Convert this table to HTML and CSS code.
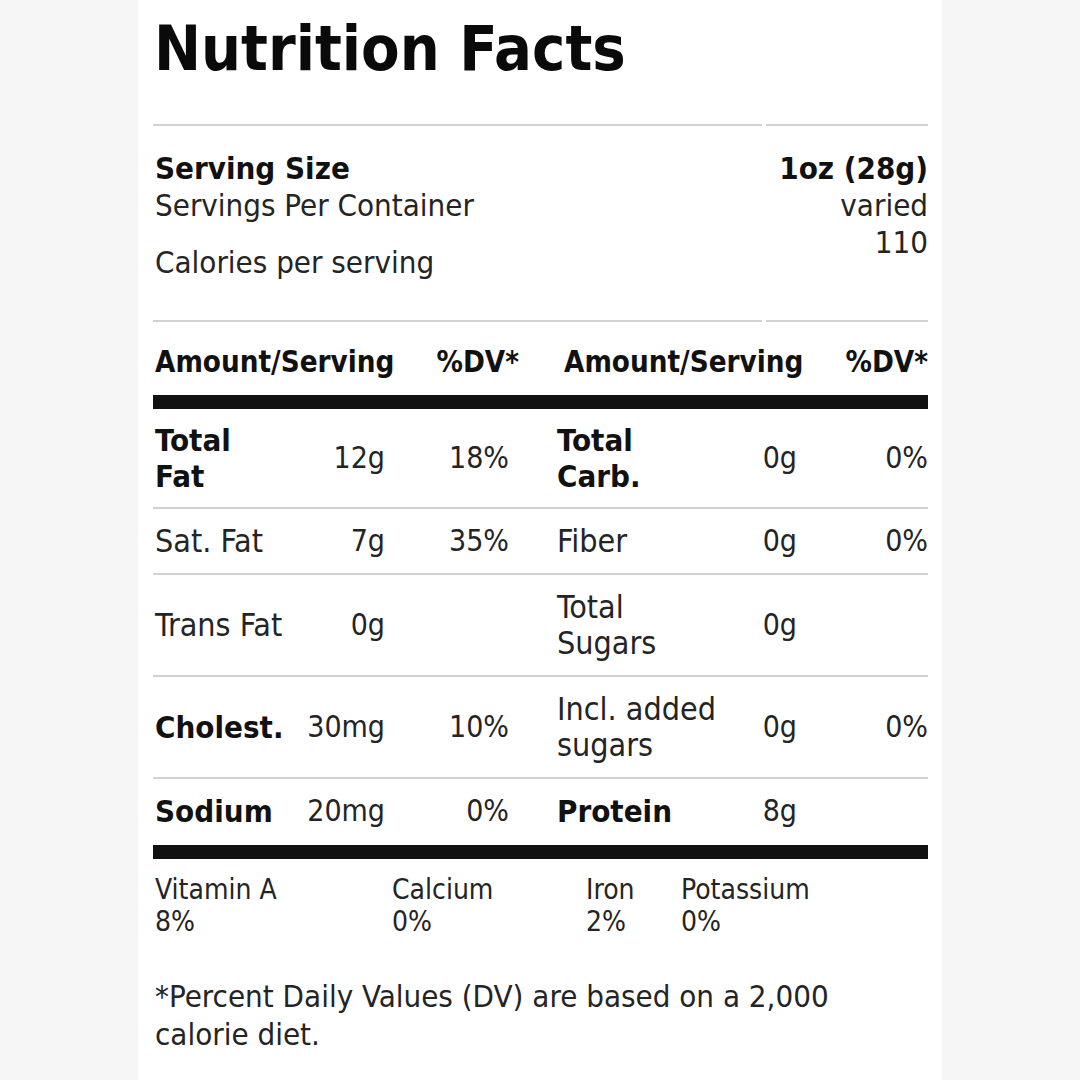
FILE: index.html
```html
<!DOCTYPE html>
<html lang="en">
<head>
<meta charset="utf-8">
<title>Nutrition Facts</title>
<link rel="stylesheet" href="styles.css">
</head>
<body>
<main class="label">
  <h1 class="title">Nutrition Facts</h1>
  <div class="rule"><span></span><span></span></div>

  <section class="serving">
    <div class="serving-left">
      <div class="b">Serving Size</div>
      <div>Servings Per Container</div>
      <div class="calories">Calories per serving</div>
    </div>
    <div class="serving-right">
      <div class="b">1oz (28g)</div>
      <div>varied</div>
      <div>110</div>
    </div>
  </section>

  <div class="rule"><span></span><span></span></div>

  <div class="head">
    <div class="head-half"><span>Amount/Serving</span><span>%DV*</span></div>
    <div class="head-half"><span>Amount/Serving</span><span>%DV*</span></div>
  </div>
  <div class="bar"></div>

  <div class="row first">
    <div class="lbl b">Total<br>Fat</div><div class="num">12g</div><div class="num">18%</div>
    <div class="lbl lbl2 b">Total<br>Carb.</div><div class="num">0g</div><div class="num">0%</div>
  </div>
  <div class="row">
    <div class="lbl">Sat. Fat</div><div class="num">7g</div><div class="num">35%</div>
    <div class="lbl lbl2">Fiber</div><div class="num">0g</div><div class="num">0%</div>
  </div>
  <div class="row">
    <div class="lbl">Trans Fat</div><div class="num">0g</div><div class="num"></div>
    <div class="lbl lbl2">Total<br>Sugars</div><div class="num">0g</div><div class="num"></div>
  </div>
  <div class="row">
    <div class="lbl b">Cholest.</div><div class="num">30mg</div><div class="num">10%</div>
    <div class="lbl lbl2">Incl. added<br>sugars</div><div class="num">0g</div><div class="num">0%</div>
  </div>
  <div class="row last">
    <div class="lbl b">Sodium</div><div class="num">20mg</div><div class="num">0%</div>
    <div class="lbl lbl2 b">Protein</div><div class="num">8g</div><div class="num"></div>
  </div>
  <div class="bar"></div>

  <div class="vitamins">
    <div>Vitamin A<br>8%</div>
    <div>Calcium<br>0%</div>
    <div>Iron<br>2%</div>
    <div>Potassium<br>0%</div>
  </div>

  <p class="note">*Percent Daily Values (DV) are based on a 2,000 calorie diet.</p>
</main>
</body>
</html>
```
FILE: styles.css
```css
html, body {
  margin: 0;
  padding: 0;
  background: #f6f6f6;
}
body {
  font-family: "DejaVu Sans Condensed", "DejaVu Sans", sans-serif;
  font-stretch: condensed;
  color: #242424;
}
.label {
  width: 775px;
  min-height: 1080px;
  margin: 0 auto;
  padding: 0 14px 0 15px;
  background: #fff;
  box-sizing: content-box;
}
.b { font-weight: bold; color: #111; }
.title {
  margin: 0 0 39px 1px;
  padding-top: 12px;
  font-size: 62.5px;
  line-height: 73px;
  font-weight: bold;
  color: #0a0a0a;
}
.rule {
  display: flex;
  gap: 4px;
}
.rule span {
  height: 2px;
  background: #d2d2d2;
}
.rule span:first-child { flex: 0 0 609px; }
.rule span:last-child { flex: 1; }
.serving {
  display: flex;
  justify-content: space-between;
  padding: 24px 0 39px 2px;
  font-size: 31px;
  line-height: 37px;
}
.serving-right { text-align: right; }
.calories { margin-top: 20px; }
.head {
  display: flex;
  gap: 45px;
  padding: 22px 0 15px 2px;
  font-size: 29.3px;
  line-height: 36px;
  font-weight: bold;
  color: #111;
}
.head-half {
  flex: 1;
  display: flex;
  justify-content: space-between;
}
.bar {
  height: 14px;
  background: #111;
}
.row {
  display: grid;
  grid-template-columns: 150px 82px 124px 198px 90px 131px;
  align-items: center;
  padding: 14px 0;
  border-bottom: 2px solid #d2d2d2;
  font-size: 30px;
  line-height: 36px;
}
.row.first { padding-top: 13px; padding-bottom: 13px; }
.row.last { border-bottom: 0; padding-bottom: 16px; }
.lbl { padding-left: 2px; font-size: 32px; white-space: nowrap; }
.lbl.b { font-size: 31px; }
.lbl2 { padding-left: 48px; }
.num { text-align: right; }
.vitamins {
  display: grid;
  grid-template-columns: 237px 194px 95px auto;
  padding: 15px 0 0 2px;
  font-size: 28px;
  line-height: 32px;
}
.note {
  max-width: 765px;
  margin: 39px 0 0 2px;
  font-size: 31px;
  line-height: 38px;
}
```
